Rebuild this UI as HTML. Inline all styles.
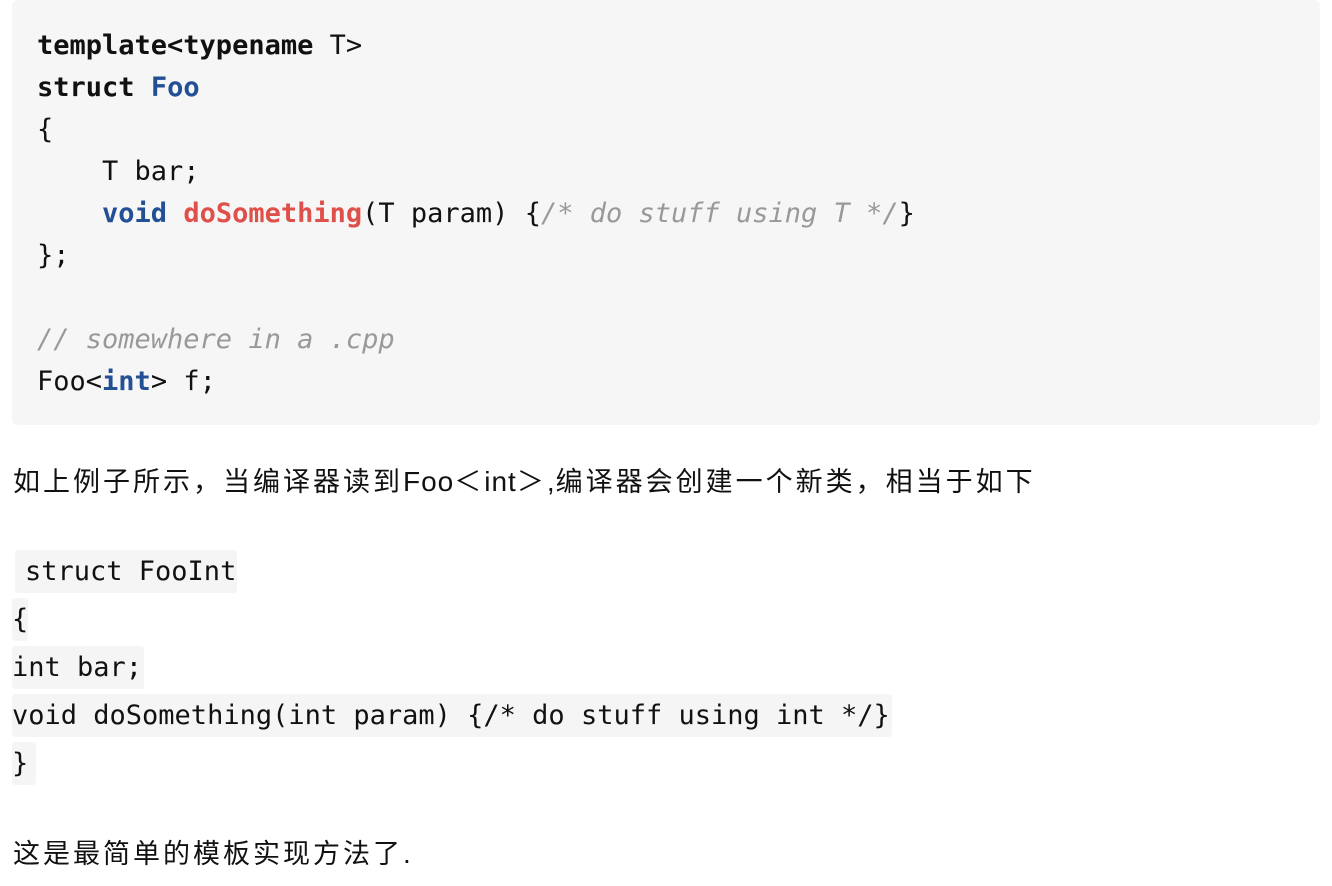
<!DOCTYPE html>
<html><head><meta charset="utf-8"><style>
body{margin:0;width:1332px;height:886px;background:#fff;position:relative;overflow:hidden}
.pre{position:absolute;left:12px;top:0;width:1308px;height:425px;background:#f6f6f6;border-radius:6px}
.m{font-family:"DejaVu Sans Mono","Liberation Mono",monospace;font-size:27px;white-space:pre;color:#111}
.cl{position:absolute;left:37px;height:42px;line-height:42px}
b{font-weight:bold}
.k{color:#234f95;font-weight:bold}
.f{color:#e0504a;font-weight:bold}
.c{color:#999;font-style:italic}
.p{position:absolute;left:13px;font-family:"Liberation Sans","Noto Sans CJK SC",sans-serif;font-size:27px;letter-spacing:3px;color:#111;line-height:40px;white-space:nowrap}
.l{letter-spacing:1px;font-size:28px}
.ic{position:absolute;height:43px;line-height:44px;background:#f5f5f5;border-radius:3px}
</style></head><body>
<div class="pre"></div>
<div class="m cl" style="top:25px"><b>template&lt;typename</b> T&gt;</div>
<div class="m cl" style="top:67px"><b>struct</b> <span class="k">Foo</span></div>
<div class="m cl" style="top:109px">{</div>
<div class="m cl" style="top:151px">    T bar;</div>
<div class="m cl" style="top:193px">    <span class="k">void</span> <span class="f">doSomething</span>(T param) {<span class="c">/* do stuff using T */</span>}</div>
<div class="m cl" style="top:235px">};</div>
<div class="m cl" style="top:319px"><span class="c">// somewhere in a .cpp</span></div>
<div class="m cl" style="top:361px">Foo&lt;<span class="k">int</span>&gt; f;</div>
<div class="p" style="top:462px">如上例子所示，当编译器读到<span class="l">Foo</span>＜<span class="l">int</span>＞<span class="l">,</span>编译器会创建一个新类，相当于如下</div>
<div class="m ic" style="left:15px;top:550px;padding:0 1px 0 10px">struct FooInt</div>
<div class="m ic" style="left:12px;top:598px">{</div>
<div class="m ic" style="left:12px;top:646px;padding-right:2px">int bar;</div>
<div class="m ic" style="left:12px;top:694px;padding-right:2px">void doSomething(int param) {/* do stuff using int */}</div>
<div class="m ic" style="left:12px;top:742px;padding-right:8px">}</div>
<div class="p" style="top:834px">这是最简单的模板实现方法了<span class="l">.</span></div>
</body></html>
